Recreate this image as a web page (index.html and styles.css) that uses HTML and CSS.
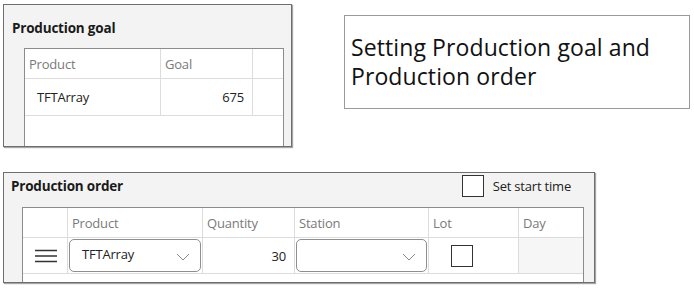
FILE: index.html
```html
<!DOCTYPE html>
<html>
<head>
<meta charset="utf-8">
<link rel="stylesheet" href="styles.css">
</head>
<body>
<div class="page">
  <div class="top-row">
    <section class="panel goal-panel">
      <h2 class="panel-title">Production goal</h2>
      <div class="table goal-table">
        <div class="cell head">Product</div>
        <div class="cell head">Goal</div>
        <div class="cell head last"></div>
        <div class="cell data name">TFTArray</div>
        <div class="cell data num">675</div>
        <div class="cell data last"></div>
      </div>
    </section>
    <div class="note">Setting Production goal and Production order</div>
  </div>

  <section class="panel order-panel">
    <div class="order-head">
      <h2 class="panel-title">Production order</h2>
      <label class="start-time"><span class="box"></span>Set start time</label>
    </div>
    <div class="table order-table">
      <div class="cell head"></div>
      <div class="cell head">Product</div>
      <div class="cell head">Quantity</div>
      <div class="cell head">Station</div>
      <div class="cell head">Lot</div>
      <div class="cell head last">Day</div>

      <div class="cell data menu">
        <svg width="22" height="14" viewBox="0 0 22 14"><path d="M0 1.5H22M0 7H22M0 12.5H22" stroke="#333" stroke-width="1.3" fill="none"/></svg>
      </div>
      <div class="cell data pad">
        <div class="select"><span>TFTArray</span>
          <svg width="14" height="8" viewBox="0 0 14 8"><path d="M1 1L7 7L13 1" stroke="#888" stroke-width="1" fill="none"/></svg>
        </div>
      </div>
      <div class="cell data num">30</div>
      <div class="cell data pad">
        <div class="select"><span></span>
          <svg width="14" height="8" viewBox="0 0 14 8"><path d="M1 1L7 7L13 1" stroke="#888" stroke-width="1" fill="none"/></svg>
        </div>
      </div>
      <div class="cell data lot"><span class="box"></span></div>
      <div class="cell data last day"></div>
    </div>
  </section>
</div>
</body>
</html>
```

FILE: styles.css
```css
* { box-sizing: border-box; }
html, body { margin: 0; padding: 0; background: #ffffff; }
body {
  font-family: "Open Sans", "Noto Sans", "Liberation Sans", sans-serif;
  color: #1a1a1a;
}
.page {
  padding: 4px 0 0 3px;
  width: 694px;
  height: 292px;
  overflow: hidden;
}
.top-row {
  display: flex;
  align-items: flex-start;
}
.panel {
  background: #f3f3f3;
  border: 1px solid #6e6e6e;
  box-shadow: 1px 1px 1px rgba(0,0,0,0.35);
  overflow: hidden;
}
.panel-title {
  margin: 0;
  font-size: 13.5px;
  font-weight: 700;
  letter-spacing: -0.2px;
  line-height: 18px;
}
.goal-panel {
  width: 289px;
  height: 143px;
  padding: 14px 0 0 8px;
}
.goal-panel .table {
  margin: 11px 0 0 12px;
}
.table {
  display: grid;
  background: #ffffff;
  border: 1px solid #8c8c8c;
  border-bottom: none;
}
.goal-table {
  width: 260px;
  grid-template-columns: 136px 92px 30px;
  grid-template-rows: 30px 37px 40px;
}
.cell {
  border-right: 1px solid #dcdcdc;
  border-bottom: 1px solid #dcdcdc;
  font-size: 13px;
  display: flex;
  align-items: center;
  letter-spacing: -0.2px;
}
.cell.last { border-right: none; }
.cell.head {
  color: #7a7a7a;
  padding-left: 4px;
}
.cell.data.name { padding-left: 12px; color: #222; }
.cell.data.num { justify-content: flex-end; padding-right: 8px; color: #222; }
.note {
  margin: 11px 0 0 52px;
  width: 346px;
  height: 94px;
  border: 1px solid #9a9a9a;
  font-size: 23px;
  line-height: 29px;
  padding: 17px 0 0 6px;
  letter-spacing: 0.1px;
  color: #111;
}
.order-panel {
  margin-top: 25px;
  width: 592px;
  height: 111px;
}
.order-head {
  display: flex;
  align-items: center;
  justify-content: space-between;
  height: 24px;
  margin-top: 1px;
  padding: 0 23px 0 7px;
}
.start-time {
  display: flex;
  align-items: center;
  font-size: 13px;
  letter-spacing: -0.2px;
  color: #222;
}
.box {
  display: inline-block;
  width: 22px;
  height: 22px;
  border: 1px solid #333;
  background: #fff;
}
.start-time .box { margin-right: 9px; }
.order-table {
  margin: 9px 0 0 18px;
  width: 562px;
  grid-template-columns: 45px 135px 92px 134px 90px 64px;
  grid-template-rows: 30px 36px 20px;
}
.cell.menu { justify-content: center; padding-left: 1px; }
.cell.pad { padding: 1px 1px; }
.select {
  width: 100%;
  height: 100%;
  border: 1px solid #8e8e8e;
  border-radius: 5px;
  background: #fff;
  display: flex;
  align-items: center;
  justify-content: space-between;
  padding: 0 10px 0 12px;
  font-size: 13px;
  color: #222;
}
.select span { margin-top: -4px; }
.select svg { margin-top: 2px; }
.cell.lot { justify-content: flex-start; padding-left: 22px; }
.cell.day { background: #f6f6f6; }
```
